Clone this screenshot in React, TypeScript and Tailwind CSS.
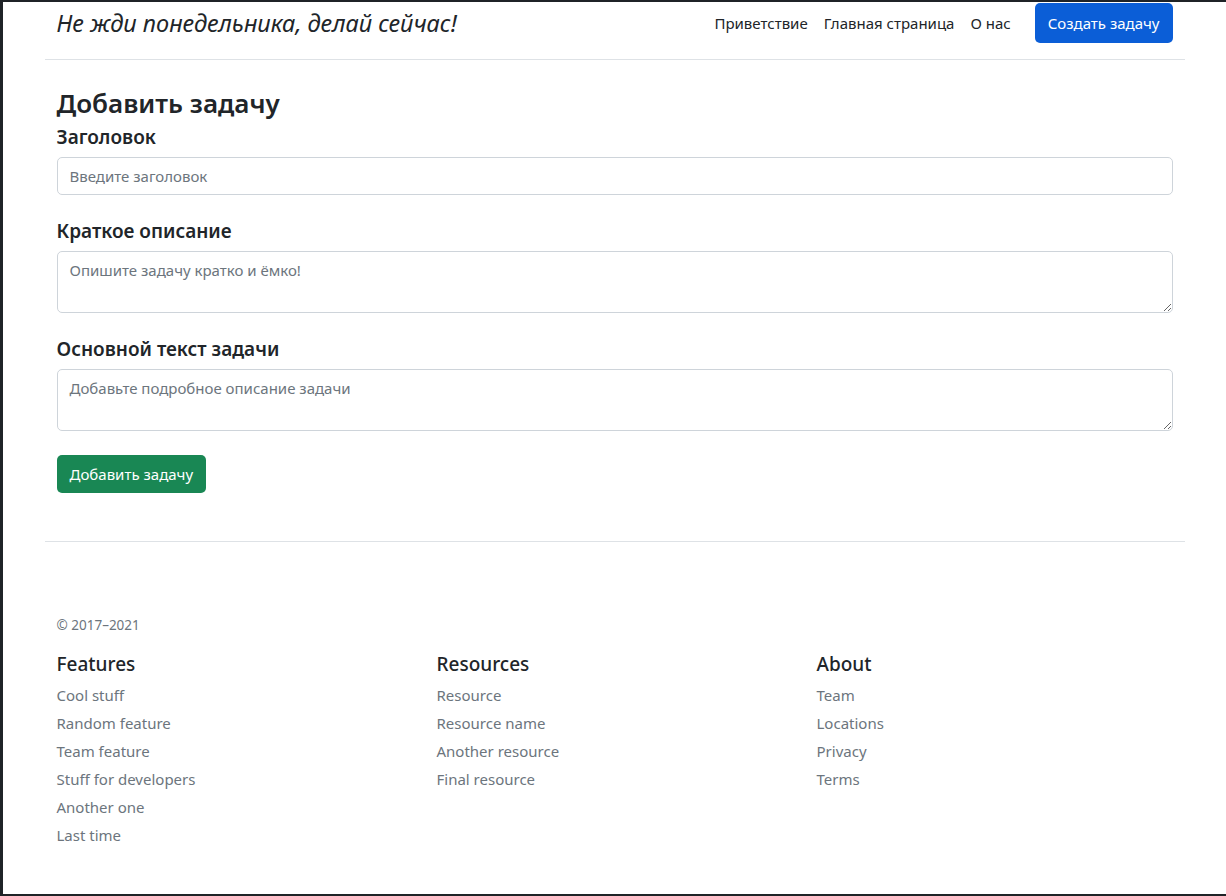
import { Fragment } from "react";

const navLinks = ["Приветствие", "Главная страница", "О нас"];

const footerCols = [
  {
    title: "Features",
    links: [
      "Cool stuff",
      "Random feature",
      "Team feature",
      "Stuff for developers",
      "Another one",
      "Last time",
    ],
  },
  {
    title: "Resources",
    links: ["Resource", "Resource name", "Another resource", "Final resource"],
  },
  {
    title: "About",
    links: ["Team", "Locations", "Privacy", "Terms"],
  },
];

const Field = ({
  label,
  placeholder,
  multiline,
}: {
  label: string;
  placeholder: string;
  multiline?: boolean;
}) => (
  <div className="mb-6">
    <label className="mb-2 block text-[19px] font-semibold leading-6 text-[#212529]">
      {label}
    </label>
    {multiline ? (
      <textarea
        rows={2}
        placeholder={placeholder}
        className="block h-[62px] w-full rounded-[5px] border border-[#ced4da] px-3 py-1.5 text-[15px] leading-6 text-[#212529] placeholder:text-[#6c757d] outline-none"
      />
    ) : (
      <input
        type="text"
        placeholder={placeholder}
        className="block h-[38px] w-full rounded-[5px] border border-[#ced4da] px-3 py-1.5 text-[15px] leading-6 text-[#212529] placeholder:text-[#6c757d] outline-none"
      />
    )}
  </div>
);

const App = () => {
  return (
    <div className="h-[896px] overflow-hidden border-t-2 border-b-2 border-l-[3px] border-[#1f2327] bg-white font-['Noto_Sans',sans-serif] text-[#212529]">
      <div className="mx-auto w-[1140px]">
        {/* header */}
        <header className="flex items-center border-b border-[#dee2e6] px-3 pt-px pb-4">
          <span className="text-[23.5px] italic leading-[29px]">
            Не жди понедельника, делай сейчас!
          </span>
          <nav className="ml-auto flex items-center">
            {navLinks.map((link) => (
              <a key={link} href="#" className="px-2 text-[15px] leading-6 text-[#212529]">
                {link}
              </a>
            ))}
            <button
              type="button"
              className="ml-4 h-10 rounded-[5px] bg-[#0b5ed7] px-[13px] text-[15px] leading-6 text-white"
            >
              Создать задачу
            </button>
          </nav>
        </header>

        {/* form */}
        <main className="px-3 pt-[26px] pb-12">
          <h3 className="mb-[5px] text-[26px] font-semibold leading-[34px]">
            Добавить задачу
          </h3>
          <Field label="Заголовок" placeholder="Введите заголовок" />
          <Field
            label="Краткое описание"
            placeholder="Опишите задачу кратко и ёмко!"
            multiline
          />
          <Field
            label="Основной текст задачи"
            placeholder="Добавьте подробное описание задачи"
            multiline
          />
          <button
            type="button"
            className="h-[38px] rounded-[5px] bg-[#198754] px-[13px] text-[15px] leading-6 text-white"
          >
            Добавить задачу
          </button>
        </main>

        {/* footer */}
        <footer className="border-t border-[#dee2e6] px-3 pt-[73px]">
          <small className="mb-4 block text-[13.5px] leading-[21px] text-[#6c757d]">
            © 2017–2021
          </small>
          <div className="grid grid-cols-3 gap-6">
            {footerCols.map((col) => (
              <Fragment key={col.title}>
                <div>
                  <h5 className="mb-[7px] text-[19px] font-medium leading-6">
                    {col.title}
                  </h5>
                  <ul>
                    {col.links.map((link) => (
                      <li key={link} className="mb-1">
                        <a href="#" className="text-[15px] leading-6 text-[#6c757d]">
                          {link}
                        </a>
                      </li>
                    ))}
                  </ul>
                </div>
              </Fragment>
            ))}
          </div>
        </footer>
      </div>
    </div>
  );
};

export default App;
